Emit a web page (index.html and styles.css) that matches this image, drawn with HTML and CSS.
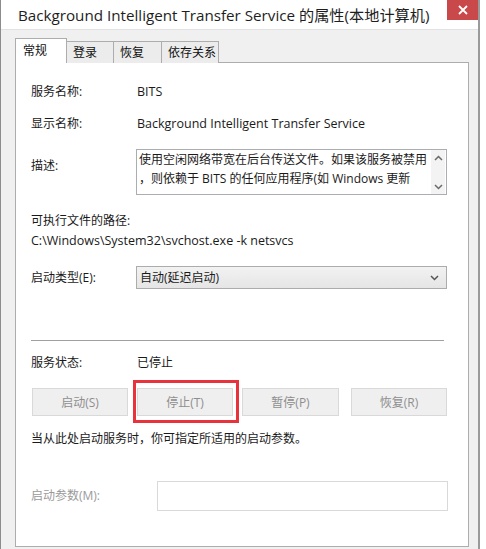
FILE: index.html
```html
<!DOCTYPE html>
<html lang="zh-CN">
<head>
    <meta charset="UTF-8">
    <title>Background Intelligent Transfer Service 的属性</title>
    <link rel="stylesheet" href="styles.css">
</head>
<body>
    <div class="svc-window">
        <!-- Title bar -->
        <div class="svc-titlebar">
            <span class="svc-title">Background Intelligent Transfer Service 的属性(本地计算机)</span>
            <div class="svc-close">
                <svg width="10" height="10" viewBox="0 0 10 10">
                    <path d="M1 1 L9 9 M9 1 L1 9" stroke="#fff" stroke-width="1.8" fill="none"/>
                </svg>
            </div>
        </div>

        <div class="svc-body">
            <!-- Tabs -->
            <div class="svc-tabs">
                <div class="svc-tab svc-tab-active">常规</div>
                <div class="svc-tab tab-w47">登录</div>
                <div class="svc-tab tab-w48">恢复</div>
                <div class="svc-tab tab-w57">依存关系</div>
            </div>

            <!-- General page -->
            <div class="svc-panel">
                <div class="field-row row-name">
                    <div class="field-label">服务名称:</div>
                    <div class="field-value latin">BITS</div>
                </div>
                <div class="field-row row-display">
                    <div class="field-label">显示名称:</div>
                    <div class="field-value latin">Background Intelligent Transfer Service</div>
                </div>
                <div class="field-row row-desc">
                    <div class="field-label desc-label">描述:</div>
                    <div class="desc-box">
                        <div class="desc-text">
                            <div class="desc-line">使用空闲网络带宽在后台传送文件。如果该服务被禁用</div>
                            <div class="desc-line">，则依赖于 BITS 的任何应用程序(如 Windows 更新</div>
                        </div>
                        <div class="desc-scroll">
                            <svg width="9" height="6" viewBox="0 0 9 6"><path d="M1 5 L4.5 1.5 L8 5" stroke="#6a6a6a" stroke-width="1.5" fill="none"/></svg>
                            <svg width="9" height="6" viewBox="0 0 9 6"><path d="M1 1 L4.5 4.5 L8 1" stroke="#6a6a6a" stroke-width="1.5" fill="none"/></svg>
                        </div>
                    </div>
                </div>

                <div class="path-label">可执行文件的路径:</div>
                <div class="path-value latin">C:\Windows\System32\svchost.exe -k netsvcs</div>

                <div class="field-row row-start">
                    <div class="field-label">启动类型(E):</div>
                    <div class="start-select">
                        <span>自动(延迟启动)</span>
                        <svg width="9" height="6" viewBox="0 0 9 6"><path d="M1 1 L4.5 4.5 L8 1" stroke="#555" stroke-width="1.5" fill="none"/></svg>
                    </div>
                </div>

                <div class="svc-separator"></div>

                <div class="field-row row-status">
                    <div class="field-label">服务状态:</div>
                    <div class="field-value">已停止</div>
                </div>

                <div class="svc-buttons">
                    <button class="svc-btn">启动(S)</button>
                    <div class="btn-wrap">
                        <button class="svc-btn">停止(T)</button>
                        <div class="mark-box"></div>
                    </div>
                    <button class="svc-btn btn-pause">暂停(P)</button>
                    <button class="svc-btn btn-resume">恢复(R)</button>
                </div>

                <div class="svc-note">当从此处启动服务时，你可指定所适用的启动参数。</div>

                <div class="field-row row-param">
                    <div class="field-label param-label">启动参数(M):</div>
                    <div class="param-input"></div>
                </div>
            </div>
        </div>
    </div>
</body>
</html>
```

FILE: styles.css
```css
* {
    box-sizing: border-box;
    margin: 0;
    padding: 0;
}

body {
    font-family: 'Open Sans', 'Noto Sans CJK SC', sans-serif;
    font-size: 12px;
    color: #1a1a1a;
    background-color: #fff;
}

.latin {
    font-size: 12.5px;
}

.svc-window {
    width: 480px;
    height: 549px;
    border-left: 1px solid #8c8c8c;
    border-right: 2px solid #9a9a9a;
    background-color: #f0f0f0;
    overflow: hidden;
}

.svc-titlebar {
    height: 30px;
    background-color: #fff;
    display: flex;
    justify-content: space-between;
    align-items: flex-start;
    border-bottom: 1px solid #e2e2e2;
}

.svc-title {
    font-size: 15.2px;
    line-height: 30px;
    padding-left: 17px;
    color: #1e1e1e;
    white-space: nowrap;
}

.svc-close {
    width: 31px;
    height: 20px;
    background-color: #c9484a;
    display: flex;
    justify-content: center;
    align-items: center;
}

.svc-body {
    padding: 8px 8px 0 14px;
}

.svc-tabs {
    display: flex;
    align-items: flex-end;
    height: 25px;
    margin-bottom: -1px;
    position: relative;
    z-index: 1;
}

.svc-tab {
    height: 22px;
    border: 1px solid #adadad;
    border-bottom: none;
    background-color: #ececec;
    margin-left: -1px;
    padding-left: 6px;
    line-height: 21px;
    font-size: 12px;
    color: #111;
    white-space: nowrap;
}

.svc-tab-active {
    width: 52px;
    height: 25px;
    margin-left: 0;
    padding-left: 7px;
    background-color: #fff;
    line-height: 23px;
}

.tab-w47 { width: 48px; }
.tab-w48 { width: 49px; }
.tab-w57 { width: 58px; }

.svc-panel {
    width: 454px;
    height: 485px;
    border: 1px solid #adadad;
    background-color: #fff;
    padding: 0 20px 0 15px;
}

.field-row {
    display: flex;
    align-items: center;
    line-height: 18px;
}

.field-label {
    width: 105px;
    flex-shrink: 0;
}

.field-value {
    padding-left: 1px;
}

.row-name { margin-top: 20px; }
.row-display { margin-top: 14px; }

.row-desc {
    margin-top: 16px;
    align-items: flex-start;
}

.desc-label {
    padding-top: 8px;
}

.desc-box {
    width: 311px;
    height: 46px;
    border: 1px solid #abadb3;
    display: flex;
    overflow: hidden;
}

.desc-text {
    flex: 1;
    padding: 0 0 0 2px;
    line-height: 19px;
    height: 44px;
    overflow: hidden;
}

.desc-line {
    white-space: nowrap;
}

.desc-scroll {
    width: 14px;
    margin-right: 1px;
    background-color: #f3f3f3;
    display: flex;
    flex-direction: column;
    justify-content: space-between;
    align-items: center;
    padding: 5px 0 4px;
}

.path-label {
    margin-top: 17px;
    line-height: 18px;
}

.path-value {
    margin-top: 2px;
    line-height: 18px;
}

.row-start { margin-top: 16px; }

.start-select {
    width: 311px;
    height: 23px;
    border: 1px solid #acacac;
    background: linear-gradient(#f2f2f2, #e5e5e5);
    display: flex;
    justify-content: space-between;
    align-items: center;
    padding: 0 7px 0 3px;
}

.svc-separator {
    margin-top: 51px;
    margin-right: 4px;
    height: 1px;
    background-color: #a0a0a0;
}

.row-status { margin-top: 13px; }

.svc-buttons {
    margin-top: 16px;
    display: flex;
    padding-left: 1px;
}

.svc-btn {
    width: 96px;
    height: 28px;
    border: 1px solid #d9d9d9;
    background-color: #efefef;
    color: #8e8e8e;
    font-family: inherit;
    font-size: 12px;
}

.btn-wrap {
    position: relative;
    margin-left: 9px;
}

.btn-wrap .svc-btn {
    display: block;
}

.mark-box {
    position: absolute;
    left: -4px;
    top: -8px;
    width: 106px;
    height: 43px;
    border: 3px solid #e8323c;
}

.btn-pause {
    width: 97px;
    margin-left: 9px;
}

.btn-resume {
    margin-left: 12px;
}

.svc-note {
    margin-top: 14px;
    line-height: 18px;
}

.row-param { margin-top: 33px; }

.param-label {
    width: 126px;
    color: #9a9a9a;
}

.param-input {
    width: 291px;
    height: 30px;
    border: 1px solid #d9d9d9;
}
```
